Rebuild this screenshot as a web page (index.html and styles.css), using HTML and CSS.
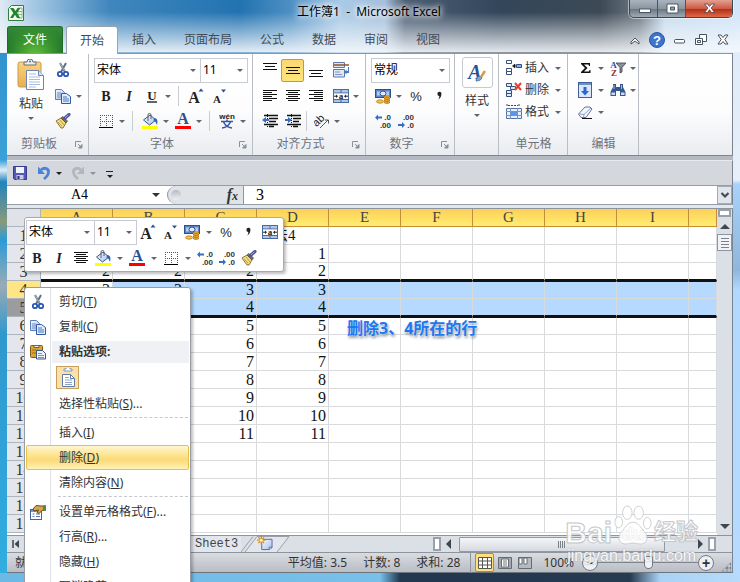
FILE: index.html
```html
<!DOCTYPE html>
<html lang="zh-CN">
<head>
<meta charset="utf-8">
<title>工作簿1 - Microsoft Excel</title>
<link rel="stylesheet" href="styles.css">
</head>
<body>
<svg class="defs" aria-hidden="true">
  <defs>
    <linearGradient id="gBlue" x1="0" y1="0" x2="1" y2="1"><stop offset="0" stop-color="#f4f8ff"/><stop offset="1" stop-color="#a9c1ea"/></linearGradient>
    <linearGradient id="gGold" x1="0" y1="0" x2="0" y2="1"><stop offset="0" stop-color="#f9d27d"/><stop offset="1" stop-color="#e9b04c"/></linearGradient>
  </defs>
</svg>
<svg class="symbols" aria-hidden="true">
  <symbol id="i-paste" viewBox="0 0 28 32">
    <rect x="1" y="3" width="23" height="25" rx="2" fill="url(#gGold)" stroke="#c99a4e"/>
    <path d="M7 6V3h3a3 3 0 0 1 6 0h3v3z" fill="#e9ebee" stroke="#6a6f77"/><circle cx="13" cy="2.500" r="1" fill="#6a6f77"/>
    <path d="M9.500 11.500h12l5 5v14h-17z" fill="#fff" stroke="#6b86b5"/><path d="M21.500 11.500v5h5" fill="#d5e2f6" stroke="#6b86b5"/>
    <path d="M12 15h7M12 18h11M12 20.500h11M12 23h11M12 25.500h11M12 28h7" stroke="#a9bddc"/>
  </symbol>
  <symbol id="i-cut" viewBox="0 0 16 16">
    <path d="M5 1l5 9M11 1L6 10" stroke="#5d7186" stroke-width="2" fill="none"/><path d="M5 1l4.500 8" stroke="#c7d3df" stroke-width=".7"/>
    <circle cx="5" cy="12" r="2.200" fill="#fff" stroke="#2b57b5" stroke-width="1.800"/><circle cx="11" cy="12" r="2.200" fill="#fff" stroke="#2b57b5" stroke-width="1.800"/>
  </symbol>
  <symbol id="i-copy" viewBox="0 0 16 16">
    <path d="M.5 1.500h6l3 3v7h-9z" fill="url(#gBlue)" stroke="#5d7fb8"/><path d="M2 5h4M2 7h4M2 9h4" stroke="#6c8ec9"/>
    <path d="M6.500 5.500h5l4 3v7h-9z" fill="#e1ebfb" stroke="#2f5aa8"/><path d="M8 9h4M8 11h6M8 13h6" stroke="#4a76be"/>
  </symbol>
  <symbol id="i-brush" viewBox="0 0 16 16">
    <path d="M1 8l5-3 5 5-3 5H6z" fill="#f1dc86" stroke="#8d7530"/><path d="M3 9l4 4M5 7l4 5" stroke="#c1a043"/>
    <path d="M6 5l2-1.500L12.500 8 11 10z" fill="#77705e" stroke="#4f4a3e" stroke-width=".7"/><path d="M9.500 5.500L14 1.500" stroke="#5154a0" stroke-width="3.200" stroke-linecap="round"/><path d="M10 5l3.500-3.200" stroke="#a4a8e0"/>
  </symbol>
  <symbol id="i-b" viewBox="0 0 16 16"><text x="8" y="12.500" text-anchor="middle" class="t-b">B</text></symbol>
  <symbol id="i-i" viewBox="0 0 16 16"><text x="8" y="12.500" text-anchor="middle" class="t-i">I</text></symbol>
  <symbol id="i-u" viewBox="0 0 16 16"><text x="8" y="11.500" text-anchor="middle" class="t-u">U</text><path d="M3 14h10" stroke="#222" stroke-width="1.400"/></symbol>
  <symbol id="i-grow" viewBox="0 0 16 16"><text x="6" y="14.500" text-anchor="middle" class="t-grow">A</text><path d="M10.500 3.500l2.500-3 2.500 3z" fill="#274f9c"/></symbol>
  <symbol id="i-shrink" viewBox="0 0 16 16"><text x="6" y="14.500" text-anchor="middle" class="t-shrink">A</text><path d="M10 1.500h5l-2.500 3z" fill="#274f9c"/></symbol>
  <symbol id="i-border" viewBox="0 0 16 16"><path d="M2 2.500h13M2 8.500h13" stroke="#555" stroke-dasharray="1 1"/><path d="M2.500 2v12M8.500 2v12M14.500 2v12" stroke="#555" stroke-dasharray="1 1"/><path d="M1 14.500h14" stroke="#000"/></symbol>
  <symbol id="i-fill" viewBox="0 0 16 16"><path d="M1.500 7L8 2l6 5-6.500 5z" fill="url(#gBlue)" stroke="#35598f"/><path d="M6 8V2a1.500 1.500 0 0 1 3 0V6" fill="none" stroke="#5a5f66"/><path d="M12 5c3.500 0 4 3 3 7-1-2.500-1.800-4-3.500-4.500z" fill="#2e64b8"/><path d="M0 13h16v3H0z" fill="#ffff00"/></symbol>
  <symbol id="i-color" viewBox="0 0 16 16"><text x="8" y="11" text-anchor="middle" class="t-color">A</text><path d="M0 13h16v3H0z" fill="#f00"/></symbol>
  <symbol id="i-wen" viewBox="0 0 16 16"><text x="8" y="6" text-anchor="middle" class="t-wen">wén</text><path d="M2 8.500h12M8 6.500v2M4.500 9C6 12 9 14.500 13 15M11.500 9C10 12 7 14.500 3 15" fill="none" stroke="#3457a8" stroke-width="1.500"/></symbol>
  <symbol id="i-top" viewBox="0 0 16 16"><path d="M1 1.500h14M3 4.500h10M1 7.500h14" stroke="#111"/></symbol>
  <symbol id="i-mid" viewBox="0 0 16 16"><path d="M1 5.500h14M3 8.500h10M1 11.500h14" stroke="#111"/></symbol>
  <symbol id="i-bot" viewBox="0 0 16 16"><path d="M1 8.500h14M3 11.500h10M1 14.500h14" stroke="#111"/></symbol>
  <symbol id="i-left" viewBox="0 0 16 16"><path d="M1 2.500h14M1 4.500h9M1 6.500h14M1 8.500h9M1 10.500h14M1 12.500h9" stroke="#111"/></symbol>
  <symbol id="i-center" viewBox="0 0 16 16"><path d="M1 2.500h14M3 4.500h10M1 6.500h14M3 8.500h10M1 10.500h14M3 12.500h10" stroke="#111"/></symbol>
  <symbol id="i-right" viewBox="0 0 16 16"><path d="M1 2.500h14M6 4.500h9M1 6.500h14M6 8.500h9M1 10.500h14M6 12.500h9" stroke="#111"/></symbol>
  <symbol id="i-outdent" viewBox="0 0 16 16"><path d="M2 2.500h14M7 5.500h9M7 8.500h7M2 11.500h14M7 13.500h5" stroke="#111" stroke-width="1.500"/><path d="M5.500 1v14" stroke="#111" stroke-dasharray="1 1"/><path d="M0 7l4-3v2h3v2H4v2z" fill="#356dc6"/></symbol>
  <symbol id="i-indent" viewBox="0 0 16 16"><path d="M2 2.500h14M8 5.500h8M8 8.500h6M2 11.500h14M8 13.500h5" stroke="#111" stroke-width="1.500"/><path d="M6.500 1v14" stroke="#111" stroke-dasharray="1 1"/><path d="M7 7L3 4v2H0v2h3v2z" fill="#356dc6"/></symbol>
  <symbol id="i-wrap" viewBox="0 0 16 16"><path d="M.5.500h11v5H.5zM.5 7.500h11v7.500h-11z" fill="#dce7f7" stroke="#5d7ba8"/><path d="M1 3h15" stroke="#8f5528" stroke-width="1.500"/><path d="M2 10h5M2 12.500h7" stroke="#7f97ba"/><path d="M15 5v4h-1.500V7.500L11 10l2.500 2.500V11H16V5z" fill="#4c77bf"/></symbol>
  <symbol id="i-merge" viewBox="0 0 16 16"><rect x=".5" y="1.500" width="15" height="13" fill="#abc7ee" stroke="#4a6a9e"/><path d="M1 5h14M1 11.500h14M8 2v3M8 12v2" stroke="#4a6a9e"/><path d="M1 5.500h14v5.500H1z" fill="#fff"/><text x="8" y="11" text-anchor="middle" class="t-merge">a</text><path d="M1 8.200h3M12 8.200h3" stroke="#222"/><path d="M3 6.500l2 1.700-2 1.700zM13 6.500l-2 1.700 2 1.700z" fill="#222"/></symbol>
  <symbol id="i-orient" viewBox="0 0 16 16"><text x="0" y="12" transform="rotate(-45 4 10)" class="t-orient">ab</text><path d="M6 15l8-8M11 7h3.500v3.500" fill="none" stroke="#555"/></symbol>
  <symbol id="i-money" viewBox="0 0 16 16"><rect x=".5" y="1.500" width="15" height="8" fill="#5c86c9" stroke="#2a4f92"/><path d="M2 3.500h4v4H2zM10 3.500h4v4h-4z" fill="#b7cdf0"/><ellipse cx="8" cy="5.500" rx="3" ry="2.500" fill="#dfeaff" stroke="#2a4f92"/><ellipse cx="5" cy="13.500" rx="3.500" ry="1.700" fill="#f5c34a" stroke="#a86f0d" stroke-width=".7"/><path d="M9 8h6v6c-1 1.500-5 1.500-6 0z" fill="#f2b63a"/><path d="M9 8.500c2 1 4 1 6 0M9 10.500c2 1 4 1 6 0M9 12.500c2 1 4 1 6 0M9 14.500c2 1 4 1 6 0" fill="none" stroke="#a8690c"/></symbol>
  <symbol id="i-pct" viewBox="0 0 16 16"><text x="8" y="12.500" text-anchor="middle" class="t-pct">%</text></symbol>
  <symbol id="i-comma" viewBox="0 0 16 16"><path d="M6.500 6a2 2 0 1 1 3.800.5C10.300 9 9 10.500 7 11.500 8 10.500 8.500 9.500 8.200 8 7.200 8 6.500 7 6.500 6z" fill="#222"/></symbol>
  <symbol id="i-inc" viewBox="0 0 16 16"><text x="16" y="7" text-anchor="end" class="t-dec">.0</text><text x="16" y="15" text-anchor="end" class="t-dec">.00</text><path d="M0 4.500l3-3v2h4v2H3v2z" fill="#356dc6"/></symbol>
  <symbol id="i-dec" viewBox="0 0 16 16"><text x="16" y="7" text-anchor="end" class="t-dec">.00</text><text x="16" y="15" text-anchor="end" class="t-dec">.0</text><path d="M7 12l-3-3v2H0v2h4v2z" fill="#356dc6"/></symbol>
  <symbol id="i-style" viewBox="0 0 20 20"><text x="8" y="16" text-anchor="middle" class="t-style">A</text><path d="M9 18c0-3 2-5 4-5l2 2c-1 2-3 3-6 3z" fill="#79a8e0" stroke="#2c5794" stroke-width=".7"/><path d="M14 14l4-6" stroke="#d4a03d" stroke-width="2.500"/></symbol>
  <symbol id="i-insert" viewBox="0 0 16 16"><path d="M.5.500h5v3h-5zM.5 8.500h5v3h-5zM.5 11.500h5v3h-5z" fill="#fff" stroke="#33507f"/><path d="M10.500 4.500h5v3h-5z" fill="#82b1f2" stroke="#33507f"/><path d="M8 6h2M9 4L6.500 6 9 8z" fill="#111" stroke="#111" stroke-width=".6"/></symbol>
  <symbol id="i-delete" viewBox="0 0 16 16"><path d="M.5 1.500h5v3h-5zM4.500 4.500h5v3h-5zM.5 8.500h5v3h-5zM.5 11.500h5v3h-5z" fill="#dceaff" stroke="#33507f"/><path d="M9 1l6 7M15 1L9 8" stroke="#e2402c" stroke-width="2"/></symbol>
  <symbol id="i-format" viewBox="0 0 16 16"><path d="M.5 4.500h15v10H.5z" fill="#e6effc" stroke="#5273a6"/><path d="M0 7.500h16M0 11.500h16M4.500 4v11M11.500 4v11" stroke="#7893bd"/><path d="M5 8h6v3H5z" fill="#5e93e8"/><path d="M1 0v3M13 0v3M2 1.500h10" stroke="#444" stroke-dasharray="2 1"/></symbol>
  <symbol id="i-sum" viewBox="0 0 16 16"><path d="M4 3h9v3h-1l-.5-1.500H7L10.500 8 7 11.500h5L12.500 10h1v3H4v-1l4-4-4-4z" fill="#111"/></symbol>
  <symbol id="i-down" viewBox="0 0 16 16"><rect x="1.500" y=".5" width="13" height="15" fill="#dbe8fb" stroke="#3e5f99"/><path d="M2 1h12v2H2z" fill="#6f8fc4"/><path d="M6.500 5h3v4H12l-4 4.500L4 9h2.500z" fill="#2c66cf"/></symbol>
  <symbol id="i-erase" viewBox="0 0 16 16"><path d="M1.500 10L8 3h5l2 2-6 8.500H4z" fill="#f2f5fa" stroke="#63769a"/><path d="M2 10l5 .5L14 4M7 10.500l-.500 3" fill="none" stroke="#8fa3c5"/><path d="M5 14.500h10" stroke="#111"/></symbol>
  <symbol id="i-sort" viewBox="0 0 16 16"><text x="3.500" y="7.500" text-anchor="middle" class="t-sa">A</text><text x="4" y="16" text-anchor="middle" class="t-sz">Z</text><path d="M6 3h10l-4 4.500V12l-2 1V7.500z" fill="#888e96" stroke="#3e444b" stroke-width=".8"/></symbol>
  <symbol id="i-find" viewBox="0 0 16 16"><path d="M3 2h3v3h4V2h3v3l2.500 5v4H10V9H6v5H.5v-4L3 5z" fill="#37588f"/><path d="M1.500 10.500h3.500v2.500H1.500zM11 10.500h3.500v2.500H11z" fill="#c8dbf8"/><path d="M4 3v4M11.500 3v4" stroke="#9bb7e4"/></symbol>
  <symbol id="i-save" viewBox="0 0 16 16"><path d="M1.500 1.500h13v13h-12l-1-1z" fill="#5558b5" stroke="#363a8f"/><path d="M4 2h8v6H4z" fill="#f1f4fb"/><path d="M4.500 10h7v4.500h-7z" fill="#c5cbe8"/><path d="M5.500 11h2v3h-2z" fill="#2a2d6e"/></symbol>
  <symbol id="i-undo" viewBox="0 0 16 16"><path d="M5 5c4-3.500 8-1 7.500 2.500C12.300 10.500 10.500 12 8 14" fill="none" stroke="currentColor" stroke-width="2.800"/><path d="M2 1.500V9h7z" fill="currentColor"/></symbol>
  <symbol id="i-sheet" viewBox="0 0 18 16"><path d="M5.500 3.500h11v9l-3 2h-8z" fill="url(#gBlue)" stroke="#51699a"/><path d="M16.500 12h-3v2.500" fill="#fff" stroke="#51699a"/><path d="M5 0v9M.5 4.500h9M2 1.500l6 6M8 1.500l-6 6" stroke="#d88a16" stroke-width="1.300"/><circle cx="5" cy="4.500" r="1.700" fill="#fff3ae"/></symbol>
  <symbol id="i-clip" viewBox="0 0 16 16"><rect x=".5" y="1.500" width="12" height="12" rx="1" fill="#dda52f" stroke="#805b16"/><path d="M4 3.500V1.500h5v2z" fill="#eee" stroke="#665"/><path d="M2 6h6M2 9h4" stroke="#9c6e15"/><path d="M6.500 6.500h6l3 3v5.500h-9z" fill="#eef4ff" stroke="#3a5687"/><path d="M8 9.500h4M8 11.500h6M8 13.500h6" stroke="#7893bd"/></symbol>
  <symbol id="i-clipdoc" viewBox="0 0 18 20"><path d="M5 3V1h2a2 2 0 0 1 4 0h2v2z" fill="#fff" stroke="#8296b5"/><path d="M3.500 6.500h8l4 4v8h-12z" fill="#fff" stroke="#5e7ba8"/><path d="M11.500 6.500v4h4" fill="none" stroke="#5e7ba8"/><path d="M6 9.500h4M6 12h7M6 14.500h7M6 16.500h7" stroke="#8ea4c7"/></symbol>
  <symbol id="i-props" viewBox="0 0 16 16"><rect x=".5" y="5.500" width="11" height="10" fill="#fff" stroke="#42659f"/><path d="M1 6h10v2H1z" fill="#6d94d4"/><path d="M2.500 10h2M6 10h4M2.500 12.500h2M6 12.500h4" stroke="#4f79bd"/><path d="M3 5l3-3.500 5 .5h5v4l-4 .5-3 3-2-1 1.500-2.500L4 7z" fill="#d7a64a" stroke="#674c18"/><path d="M13 1.500h3v5h-3z" fill="#4e8a45"/></symbol>
  <symbol id="i-excel" viewBox="0 0 16 16"><path d="M3.500.5h12v15H.5v-12z" fill="#f4f9f2" stroke="#2f7f3b"/><path d="M10 3h4v10h-4zM10 6.500h4M10 9.500h4" fill="#fff" stroke="#84bb82"/><path d="M2 3h3.500l2 3 2-3h3L9 8l3.300 5H9L7 9.800 5 13H2l3.300-5z" fill="#25842f"/></symbol>
  <symbol id="i-launch" viewBox="0 0 8 8"><path d="M.5 6V.5H6" fill="none" stroke="#8a9099"/><path d="M3 3l3 3M7 3.500V7H3.500z" fill="#8a9099" stroke="#8a9099"/></symbol>
</svg>

<div class="window">
  <header class="title">
    <svg class="app"><use href="#i-excel"/></svg>
    <h1>工作簿1&nbsp; -&nbsp; Microsoft Excel</h1>
    <div class="winctl">
      <button aria-label="最小化"><svg viewBox="0 0 28 18"><rect x="9.500" y="9" width="11" height="3.500" fill="#fff" stroke="#4a5660"/></svg></button>
      <button aria-label="最大化"><svg viewBox="0 0 28 18"><path d="M9 4h11v9H9z" fill="#fff" stroke="#4a5660"/><path d="M12.500 7h4v3h-4z" fill="#94a0aa" stroke="#4a5660"/></svg></button>
      <button class="x" aria-label="关闭"><svg viewBox="0 0 28 18"><path d="M9.500 4h3l2 2.500 2-2.500h3l-3.300 4 3.300 4.500h-3l-2-2.800-2 2.800h-3L13 8z" fill="#fff" stroke="#5c3a38" stroke-width=".8"/></svg></button>
    </div>
  </header>

  <nav class="tabs">
    <button class="file">文件</button>
    <button class="tab on">开始</button><button class="tab">插入</button><button class="tab">页面布局</button><button class="tab">公式</button><button class="tab">数据</button><button class="tab">审阅</button><button class="tab">视图</button>
    <div class="docctl">
      <button aria-label="折叠功能区"><svg viewBox="0 0 16 16"><path d="M4 10l4-4 4 4v2L8 9l-4 3z" fill="#fff" stroke="#4a525c"/></svg></button>
      <button aria-label="帮助"><svg viewBox="0 0 16 16"><circle cx="8" cy="8" r="7.500" fill="#3d74cc" stroke="#2a57a5"/><text x="8" y="12.500" text-anchor="middle" class="t-help">?</text></svg></button>
      <button aria-label="最小化工作簿"><svg viewBox="0 0 16 16"><rect x="3.500" y="7.500" width="10" height="3.500" rx="1" fill="#fff" stroke="#4a525c"/></svg></button>
      <button aria-label="还原工作簿"><svg viewBox="0 0 16 16"><path d="M6.500 2.500h7v7h-7z" fill="#fff" stroke="#4a525c"/><path d="M2.500 6.500h7v6h-7zM4.500 8.500h3v2h-3z" fill="#fff" stroke="#4a525c"/></svg></button>
      <button aria-label="关闭工作簿"><svg viewBox="0 0 16 16"><path d="M3 3h3l2 2.500L10 3h3L9.800 7.500 13 12h-3L8 9.500 6 12H3l3.200-4.500z" fill="#fff" stroke="#4a525c"/></svg></button>
    </div>
  </nav>

  <section class="ribbon">
    <div class="group g-clip">
      <div class="body cols">
        <button class="big"><svg class="s28"><use href="#i-paste"/></svg><span>粘贴</span><i class="tri"></i></button>
        <div class="rows">
          <div class="row"><button class="b" aria-label="剪切"><svg><use href="#i-cut"/></svg></button></div>
          <div class="row"><button class="b" aria-label="复制"><svg><use href="#i-copy"/></svg></button><button class="d" aria-label="复制选项"></button></div>
          <div class="row"><button class="b" aria-label="格式刷"><svg><use href="#i-brush"/></svg></button></div>
        </div>
      </div>
      <footer>剪贴板<svg class="launch"><use href="#i-launch"/></svg></footer>
    </div>

    <div class="group g-font">
      <div class="body rows">
        <div class="row">
          <span class="combo grow"><select aria-label="字体"><option>宋体</option></select></span>
          <span class="combo size"><select aria-label="字号"><option>11</option></select></span>
        </div>
        <div class="row"><button class="b" aria-label="加粗"><svg><use href="#i-b"/></svg></button><button class="b" aria-label="倾斜"><svg><use href="#i-i"/></svg></button><button class="b" aria-label="下划线"><svg><use href="#i-u"/></svg></button><button class="d" aria-label="下划线选项"></button><i class="sep"></i><button class="b" aria-label="增大字号"><svg><use href="#i-grow"/></svg></button><button class="b" aria-label="减小字号"><svg><use href="#i-shrink"/></svg></button></div>
        <div class="row"><button class="b" aria-label="边框"><svg><use href="#i-border"/></svg></button><button class="d" aria-label="边框选项"></button><i class="sep"></i><button class="b" aria-label="填充颜色"><svg><use href="#i-fill"/></svg></button><button class="d" aria-label="填充选项"></button><button class="b" aria-label="字体颜色"><svg><use href="#i-color"/></svg></button><button class="d" aria-label="颜色选项"></button><i class="sep"></i><button class="b" aria-label="拼音"><svg><use href="#i-wen"/></svg></button><button class="d" aria-label="拼音选项"></button></div>
      </div>
      <footer>字体<svg class="launch"><use href="#i-launch"/></svg></footer>
    </div>

    <div class="group g-align">
      <div class="body rows">
        <div class="row"><button class="b" aria-label="顶端对齐"><svg><use href="#i-top"/></svg></button><button class="b on" aria-label="垂直居中"><svg><use href="#i-mid"/></svg></button><button class="b" aria-label="底端对齐"><svg><use href="#i-bot"/></svg></button><button class="b wide" aria-label="自动换行"><svg><use href="#i-wrap"/></svg></button></div>
        <div class="row"><button class="b" aria-label="左对齐"><svg><use href="#i-left"/></svg></button><button class="b" aria-label="居中"><svg><use href="#i-center"/></svg></button><button class="b" aria-label="右对齐"><svg><use href="#i-right"/></svg></button><button class="b wide" aria-label="合并后居中"><svg><use href="#i-merge"/></svg></button><button class="d tight" aria-label="合并选项"></button></div>
        <div class="row"><button class="b" aria-label="减少缩进量"><svg><use href="#i-outdent"/></svg></button><button class="b" aria-label="增加缩进量"><svg><use href="#i-indent"/></svg></button><i class="sep tight"></i><button class="b" aria-label="方向"><svg><use href="#i-orient"/></svg></button><button class="d tight" aria-label="方向选项"></button></div>
      </div>
      <footer>对齐方式<svg class="launch"><use href="#i-launch"/></svg></footer>
    </div>

    <div class="group g-num">
      <div class="body rows">
        <div class="row"><span class="combo grow"><select aria-label="数字格式"><option>常规</option></select></span></div>
        <div class="row"><button class="b" aria-label="会计数字格式"><svg><use href="#i-money"/></svg></button><button class="d" aria-label="会计选项"></button><button class="b" aria-label="百分比样式"><svg><use href="#i-pct"/></svg></button><button class="b" aria-label="千位分隔样式"><svg><use href="#i-comma"/></svg></button></div>
        <div class="row"><button class="b" aria-label="增加小数位数"><svg><use href="#i-inc"/></svg></button><button class="b" aria-label="减少小数位数"><svg><use href="#i-dec"/></svg></button></div>
      </div>
      <footer>数字<svg class="launch"><use href="#i-launch"/></svg></footer>
    </div>

    <div class="group g-style">
      <button class="big"><span class="frame"><svg class="s20"><use href="#i-style"/></svg></span><span>样式</span><i class="tri"></i></button>
    </div>

    <div class="group g-cell">
      <div class="body list">
        <button class="lb"><svg><use href="#i-insert"/></svg>插入<i class="tri"></i></button>
        <button class="lb"><svg><use href="#i-delete"/></svg>删除<i class="tri"></i></button>
        <button class="lb"><svg><use href="#i-format"/></svg>格式<i class="tri"></i></button>
      </div>
      <footer>单元格</footer>
    </div>

    <div class="group g-edit">
      <div class="body list">
        <div class="row"><button class="b" aria-label="求和"><svg><use href="#i-sum"/></svg></button><button class="d" aria-label="求和选项"></button><button class="b" aria-label="排序和筛选"><svg><use href="#i-sort"/></svg></button><button class="d tight" aria-label="排序选项"></button></div>
        <div class="row"><button class="b" aria-label="填充"><svg><use href="#i-down"/></svg></button><button class="d" aria-label="填充方向"></button><button class="b" aria-label="查找和选择"><svg><use href="#i-find"/></svg></button><button class="d tight" aria-label="查找选项"></button></div>
        <div class="row"><button class="b" aria-label="清除"><svg><use href="#i-erase"/></svg></button><button class="d" aria-label="清除选项"></button></div>
      </div>
      <footer>编辑</footer>
    </div>
  </section>

  <div class="qat">
    <button aria-label="保存"><svg><use href="#i-save"/></svg></button>
    <button class="undo" aria-label="撤消"><svg><use href="#i-undo"/></svg><i class="tri"></i></button>
    <button class="redo" aria-label="恢复"><svg><use href="#i-undo"/></svg><i class="tri"></i></button>
    <button class="more" aria-label="自定义快速访问工具栏"><i class="tri"></i></button>
  </div>

  <div class="fbar">
    <span class="name"><input aria-label="名称框" value="A4"><i class="tri"></i></span>
    <span class="fx"><i class="knob"></i><em>f<small>x</small></em></span>
    <input class="formula" aria-label="编辑栏" value="3">
    <button class="expand" aria-label="展开编辑栏"><svg viewBox="0 0 10 10"><path d="M1.500 3L5 6.500 8.500 3" fill="none" stroke="#444b55" stroke-width="2.200"/></svg></button>
  </div>

  <main class="sheet">
    <div class="gridwrap">
      <table>
        <colgroup><col class="ch"><col class="cc"><col class="cc"><col class="cc"><col class="cc"><col class="cc"><col class="cc"><col class="cc"><col class="cc"><col class="cc"><col></colgroup>
        <thead><tr><th class="corner"></th><th>A</th><th>B</th><th>C</th><th>D</th><th>E</th><th>F</th><th>G</th><th>H</th><th>I</th><th></th></tr></thead>
        <tbody>
          <tr class="txt"><th>1</th><td>方法1</td><td>方法2</td><td>方法3</td><td>方法4</td><td></td><td></td><td></td><td></td><td></td><td></td></tr>
          <tr><th>2</th><td>1</td><td>1</td><td>1</td><td>1</td><td></td><td></td><td></td><td></td><td></td><td></td></tr>
          <tr class="edge"><th>3</th><td>2</td><td>2</td><td>2</td><td>2</td><td></td><td></td><td></td><td></td><td></td><td></td></tr>
          <tr class="sel after"><th>4</th><td class="active">3</td><td>3</td><td>3</td><td>3</td><td></td><td></td><td></td><td></td><td></td><td></td></tr>
          <tr class="sel edge dim"><th>5</th><td>4</td><td>4</td><td>4</td><td>4</td><td></td><td></td><td></td><td></td><td></td><td></td></tr>
          <tr class="after"><th>6</th><td>5</td><td>5</td><td>5</td><td>5</td><td></td><td></td><td></td><td></td><td></td><td></td></tr>
          <tr><th>7</th><td>6</td><td>6</td><td>6</td><td>6</td><td></td><td></td><td></td><td></td><td></td><td></td></tr>
          <tr><th>8</th><td>7</td><td>7</td><td>7</td><td>7</td><td></td><td></td><td></td><td></td><td></td><td></td></tr>
          <tr><th>9</th><td>8</td><td>8</td><td>8</td><td>8</td><td></td><td></td><td></td><td></td><td></td><td></td></tr>
          <tr><th>10</th><td>9</td><td>9</td><td>9</td><td>9</td><td></td><td></td><td></td><td></td><td></td><td></td></tr>
          <tr><th>11</th><td>10</td><td>10</td><td>10</td><td>10</td><td></td><td></td><td></td><td></td><td></td><td></td></tr>
          <tr><th>12</th><td>11</td><td>11</td><td>11</td><td>11</td><td></td><td></td><td></td><td></td><td></td><td></td></tr>
          <tr><th>13</th><td></td><td></td><td></td><td></td><td></td><td></td><td></td><td></td><td></td><td></td></tr>
          <tr><th>14</th><td></td><td></td><td></td><td></td><td></td><td></td><td></td><td></td><td></td><td></td></tr>
          <tr><th>15</th><td></td><td></td><td></td><td></td><td></td><td></td><td></td><td></td><td></td><td></td></tr>
          <tr><th>16</th><td></td><td></td><td></td><td></td><td></td><td></td><td></td><td></td><td></td><td></td></tr>
          <tr><th>17</th><td></td><td></td><td></td><td></td><td></td><td></td><td></td><td></td><td></td><td></td></tr>
        </tbody>
      </table>
    </div>
    <div class="vscroll"><i class="split"></i><i class="up"></i><i class="vthumb"></i><i class="down"></i></div>
  </main>

  <div class="sheets">
    <button class="first" aria-label="第一张工作表"><svg viewBox="0 0 10 10"><path d="M2 1v8" stroke="#3d4650" stroke-width="1.500"/><path d="M8 1v8L3.500 5z" fill="#3d4650"/></svg></button>
    <a class="stab" href="#">Sheet3</a>
    <button class="newtab" aria-label="插入工作表"><svg viewBox="0 0 52 16"><path d="M0 16L12 .5" stroke="#9aa1aa"/><path d="M4 16L16 .5h32L36 16" fill="#e3e7ed" stroke="#9aa1aa"/><use href="#i-sheet" x="15" y="0" width="18" height="15"/></svg></button>
    <div class="hscroll"><i class="vsplit"></i><i class="lt"></i><div class="track"><i class="hthumb"></i></div><i class="rt"></i><i class="vsplit"></i></div>
  </div>

  <footer class="status">
    <span class="ready">就绪</span>
    <span>平均值: 3.5</span><span>计数: 8</span><span>求和: 28</span>
    <i class="sep"></i>
    <div class="views">
      <button class="on" aria-label="普通"><svg viewBox="0 0 14 12"><path d="M.5.500h13v11H.5zM.5 4h13M.5 8h13M4.500.500v11M9.500.500v11" fill="#fff" stroke="#555"/></svg></button>
      <button aria-label="页面布局视图"><svg viewBox="0 0 14 12"><path d="M.5.500h13v11H.5z" fill="#a4a9b0" stroke="#666c74"/><path d="M3.500 2h7v8h-7z" fill="#fff" stroke="#666c74"/><path d="M5 4h4M5 6h4M5 8h4" stroke="#777"/></svg></button>
      <button aria-label="分页预览"><svg viewBox="0 0 14 12"><path d="M.5.500h13v11H.5z" fill="#b5bac1" stroke="#666c74"/><path d="M1 1h3v6H1zM6 1h3v6H6z" fill="#fff" stroke="#666c74"/></svg></button>
    </div>
    <span class="zoom">100%</span>
    <button class="round" aria-label="缩小">−</button>
    <input type="range" min="0" max="100" value="50" aria-label="显示比例">
    <button class="round" aria-label="放大">+</button>
    <i class="grip"></i>
  </footer>
</div>

<div class="callout">删除3、4所在的行</div>

<div class="mini">
  <div class="row">
    <span class="combo m1"><select aria-label="浮动字体"><option>宋体</option></select></span><span class="combo m2"><select aria-label="浮动字号"><option>11</option></select></span><button class="b" aria-label="增大字号"><svg><use href="#i-grow"/></svg></button><button class="b" aria-label="减小字号"><svg><use href="#i-shrink"/></svg></button><button class="b" aria-label="会计数字格式"><svg><use href="#i-money"/></svg></button><button class="d" aria-label="会计选项"></button><button class="b" aria-label="百分比"><svg><use href="#i-pct"/></svg></button><button class="b" aria-label="千位分隔"><svg><use href="#i-comma"/></svg></button><button class="b" aria-label="合并"><svg><use href="#i-merge"/></svg></button>
  </div>
  <div class="row">
    <button class="b" aria-label="加粗"><svg><use href="#i-b"/></svg></button><button class="b" aria-label="倾斜"><svg><use href="#i-i"/></svg></button><button class="b" aria-label="居中"><svg><use href="#i-center"/></svg></button><button class="b" aria-label="填充颜色"><svg><use href="#i-fill"/></svg></button><button class="d" aria-label="填充选项"></button><button class="b" aria-label="字体颜色"><svg><use href="#i-color"/></svg></button><button class="d" aria-label="颜色选项"></button><button class="b" aria-label="边框"><svg><use href="#i-border"/></svg></button><button class="d" aria-label="边框选项"></button><button class="b" aria-label="增加小数"><svg><use href="#i-inc"/></svg></button><button class="b" aria-label="减少小数"><svg><use href="#i-dec"/></svg></button><button class="b" aria-label="格式刷"><svg><use href="#i-brush"/></svg></button>
  </div>
</div>

<div class="menu">
  <button><svg><use href="#i-cut"/></svg><span>剪切(<u>T</u>)</span></button>
  <button><svg><use href="#i-copy"/></svg><span>复制(<u>C</u>)</span></button>
  <div class="head"><svg><use href="#i-clip"/></svg><strong>粘贴选项:</strong></div>
  <button class="opt" aria-label="粘贴"><span class="tile"><svg class="doc"><use href="#i-clipdoc"/></svg></span></button>
  <button><span>选择性粘贴(<u>S</u>)...</span></button>
  <hr>
  <button><span>插入(<u>I</u>)</span></button>
  <button class="hot"><span>删除(<u>D</u>)</span></button>
  <button><span>清除内容(<u>N</u>)</span></button>
  <hr>
  <button><svg><use href="#i-props"/></svg><span>设置单元格格式(<u>F</u>)...</span></button>
  <button><span>行高(<u>R</u>)...</span></button>
  <button><span>隐藏(<u>H</u>)</span></button>
  <button><span>取消隐藏(<u>U</u>)</span></button>
</div>

<div class="mark">
  <div class="brand"><b>Bai</b><span class="paw"><svg viewBox="0 0 40 44"><g fill="#fff" stroke="#c4c6ca"><ellipse cx="5" cy="18" rx="4" ry="6"/><ellipse cx="14" cy="8" rx="5" ry="7"/><ellipse cx="26" cy="8" rx="5" ry="7"/><ellipse cx="35" cy="19" rx="4" ry="6"/><path d="M20 18c-6 0-8 6-12 10-5 5-3 13 4 13 4 0 5-1 8-1s4 1 8 1c7 0 9-8 4-13-4-4-6-10-12-10z"/></g></svg><b>du</b></span><strong>经验</strong></div>
  <div class="url">jingyan.baidu.com</div>
</div>
</body>
</html>
```
FILE: styles.css
```css
* { box-sizing: border-box; }
html, body { height: 100%; }
body {
  margin: 0;
  overflow: hidden;
  position: relative;
  font: 12px/16px "Noto Sans", "Noto Sans CJK SC", sans-serif;
  color: #333;
  background:
    linear-gradient(180deg, rgba(255,255,255,0) 12px, rgba(246,249,252,.9) 52px, rgba(246,249,252,0) 53px) 0 0 / 100% 53px no-repeat,
    linear-gradient(90deg, #dfeaf5 0, #a9cbe6 30px, #3f86bd 110px, #2373b1 240px, #4d8fc3 290px, #a9c9e6 340px, #a5c0da 385px, #4b5d73 405px, #33465b 500px, #3d4955 600px, #6d7883 640px, #c9dcef 665px, #d2e5f9 100%) 0 0 / 100% 53px no-repeat,
    linear-gradient(90deg, #6db9e6 0, #78c0ea 380px, #22384f 400px, #263a50 630px, #a9d2f5 660px, #b7dbfa 100%) 0 100% / 100% 9px no-repeat,
    linear-gradient(180deg, #d5e4f1 0, #9cc0dd 26px, #2e90cb 27px, #3aa1d8 160px, #e0edf6 170px, #2184bd 182px, #8a9a7a 222px, #2a9bd8 240px, #9aabb5 285px, #2e98cf 335px, #31aee0 100%) 0 0 / 7px 100% no-repeat,
    linear-gradient(180deg, #dceaf8 0, #e6effa 180px, #a8d2fb 184px, #8fb6dc 270px, #b1d8ff 290px, #b6dbff 100%);
}
button, input, select { font: inherit; color: inherit; border: 0; background: none; padding: 0; margin: 0; border-radius: 0; outline: 0; }
button { display: flex; align-items: center; justify-content: center; }
svg { width: 16px; height: 16px; display: block; flex: none; }
.defs { position: absolute; width: 0; height: 0; }
.symbols { display: none; }
i { font-style: normal; flex: none; }

.t-b, .t-i, .t-u, .t-grow, .t-shrink, .t-color, .t-style, .t-merge, .t-sa, .t-sz { font-family: "Liberation Serif", serif; font-weight: bold; fill: #222; }
.t-b { font-size: 14px; }
.t-i { font-size: 14px; font-style: italic; }
.t-u { font-size: 13px; }
.t-grow { font-size: 16px; }
.t-shrink { font-size: 11px; }
.t-color { font-size: 16px; fill: #2a4f92; }
.t-style { font-size: 20px; font-style: italic; fill: #2a4f92; }
.t-merge { font-size: 9px; }
.t-sa { font-size: 9px; fill: #2a4f92; }
.t-sz { font-size: 9px; fill: #9b2f2f; }
.t-wen { font: bold 8px "Liberation Sans", sans-serif; fill: #222; }
.t-orient { font: 11px "Liberation Sans", sans-serif; fill: #222; }
.t-pct { font: 13px "Liberation Sans", sans-serif; fill: #222; }
.t-dec { font: bold 8px "Liberation Sans", sans-serif; fill: #333; }
.t-help { font: bold 13px "Liberation Sans", sans-serif; fill: #fff; }

.window {
  height: 100%;
  padding: 0 7px 9px;
  display: grid;
  grid-template-rows: 26px 27px 107px 25px 23px 1fr 17px 21px;
  grid-template-columns: minmax(0, 1fr);
}

.title { display: flex; position: relative; justify-content: space-between; }
.title .app { margin-top: 5px; margin-left: 1px; }
.title h1 {
  flex: 1; margin: 0; padding: 4px 0 0 85px; text-align: center;
  font-size: 12px; line-height: 16px; font-weight: 400; color: #000;
  text-shadow: 0 0 5px #fff, 0 0 8px #fff, 0 0 8px rgba(255,255,255,.8);
}
.winctl { display: flex; height: 18px; border: 1px solid #3c4650; border-top: 0; border-radius: 0 0 5px 5px; overflow: hidden; box-shadow: 0 0 0 1px rgba(255,255,255,.5); }
.winctl button { width: 28px; border-right: 1px solid #4a5560; background: linear-gradient(#aab4be, #8a959f 50%, #66727d 51%, #9fabb6); }
.winctl svg { width: 28px; height: 18px; }
.winctl .x { width: 46px; border-right: 0; background: linear-gradient(#e2a090, #cf5a44 50%, #b02a14 51%, #dd6a48); }

.tabs { display: flex; align-items: stretch; }
.file { width: 56px; margin-right: 3px; color: #fff; border: 1px solid #226a2c; border-bottom: 0; border-radius: 3px 3px 0 0; background: radial-gradient(ellipse at 50% 110%, #63c03c 0, #3a942f 45%, rgba(0,0,0,0) 80%), linear-gradient(#358a37, #1b6f28); }
.tab { padding: 0 13px; border: 1px solid transparent; border-bottom: 0; color: #434a54; }
.tab.on { background: #fff; border-color: #9aa3ad; border-radius: 3px 3px 0 0; margin-bottom: -1px; z-index: 1; }
.docctl { margin-left: auto; display: flex; gap: 6px; align-items: center; padding-right: 2px; }

.ribbon { display: flex; background: linear-gradient(#fff 0, #fdfdfe 55%, #e9ecf0 100%); border-top: 1px solid #8d97a2; border-bottom: 1px solid #7f868f; margin-bottom: 4px; border-right: 1px solid #7b848e; box-shadow: 0 4px 0 #b5b9c1; }
.group { display: flex; flex-direction: column; border-right: 1px solid #b9bdc4; padding: 3px 4px 0 5px; }
.g-clip { width: 82px; } .g-font { width: 164px; } .g-align { width: 113px; } .g-num { width: 89px; }
.g-style { width: 44px; } .g-cell { width: 69px; } .g-edit { width: 71px; }
.group footer { height: 20px; margin-top: auto; line-height: 18px; text-align: center; color: #6d737c; position: relative; }
.g-clip footer, .g-font footer, .g-align footer, .g-num footer { padding-right: 18px; }
.launch { width: 8px; height: 8px; position: absolute; right: 1px; top: 6px; }
.rows { display: grid; grid-template-rows: 26px 26px 24px; }
.row { display: flex; align-items: center; }
.cols { display: flex; }
.b { width: 23px; height: 23px; flex: none; }
.b.on { border: 1px solid #c59a3d; border-radius: 2px; background: linear-gradient(#fbd772, #ffe57a); }
.b.wide { margin-left: 2px; }
.d { width: 10px; height: 20px; flex: none; }
.d.tight { width: 8px; }
.d::before, .tri { content: ""; width: 0; height: 0; border: 3px solid transparent; border-top: 3px solid #61666e; border-bottom: 0; }
.sep { width: 1px; height: 20px; margin: 0 5px; background: #c9ccd2; }
.sep.tight { margin: 0 3px 0 2px; }
.combo { height: 25px; border: 1px solid #c8ccd2; background: #fff; display: flex; position: relative; }
.combo::after { content: ""; position: absolute; right: 4px; top: 10px; border: 3px solid transparent; border-top-color: #61666e; border-bottom: 0; pointer-events: none; }
.combo select { appearance: none; width: 100%; padding: 0 2px; color: #000; }
.combo.grow { flex: 1; }
.combo.size { width: 48px; }
.g-font .row .size { margin-left: -1px; }
.big { flex-direction: column; width: 36px; justify-content: flex-start; gap: 5px; padding-top: 2px; }
.g-clip .big { width: 40px; margin-right: 1px; padding-right: 0; }
.big .s28 { width: 28px; height: 32px; }
.g-style .big { width: 34px; padding-top: 0; }
.frame { border: 1px solid #c5cad2; border-radius: 3px; width: 31px; height: 31px; display: grid; place-items: center; }
.s20 { width: 20px; height: 20px; }
.list { display: grid; grid-template-rows: 22px 22px 22px; }
.lb { justify-content: flex-start; gap: 3px; padding-left: 2px; }
.lb .tri { margin-left: 3px; }

.qat { display: flex; align-items: center; gap: 8px; padding-left: 5px; background: #d4d7dc; border-top: 1px solid #e6ebf1; border-right: 1px solid #7b848e; }
.qat button { gap: 4px; }
.qat .undo { color: #4a82d6; }
.qat .redo { color: #b3b7bd; }
.redo svg { transform: scaleX(-1); }
.undo .tri, .more .tri { border-top-color: #222; }
.redo .tri { border-top-color: #8e9299; }
.more { border-top: 1px solid #222; padding-top: 3px; margin: 2px 0 0 2px; width: 7px; }

.fbar { display: flex; height: 20px; background: #fff; border-top: 1px solid #959da6; border-bottom: 1px solid #959da6; border-right: 1px solid #7b848e; box-shadow: 0 3px 0 #e3e8ef; }
.name { width: 160px; display: flex; align-items: center; padding-right: 7px; }
.name input { flex: 1; min-width: 0; text-align: center; font: 14px/18px "Liberation Serif", serif; color: #000; }
.name .tri { border-width: 4px 4px 0; border-top-color: #333; }
.fx { width: 77px; display: flex; justify-content: space-between; align-items: center; background: #dfe3e8; border-radius: 10px 0 0 10px; border-left: 1px solid #8e959e; border-right: 1px solid #8e959e; padding: 0 5px 0 3px; }
.knob { width: 10px; height: 10px; border-radius: 5px; background: linear-gradient(#b5bac2, #eef0f3); }
.fx em { font: italic bold 16px/16px "Liberation Serif", serif; color: #333; }
.fx small { font-size: 12px; }
.formula { flex: 1; min-width: 0; padding-left: 12px; font: 16px/18px "Liberation Serif", serif; color: #000; }
.expand { width: 15px; background: #e1e6ec; border: 1px solid #a3abb5; }
.expand svg { width: 10px; height: 10px; }

.sheet { display: flex; min-height: 0; background: #fff; border-top: 1px solid #8d949c; border-right: 1px solid #7b848e; }
.gridwrap { flex: 1; min-width: 0; overflow: hidden; }
table { width: 100%; table-layout: fixed; border-collapse: separate; border-spacing: 0; font: 16px/17px "Liberation Serif", "Noto Sans CJK SC", serif; color: #111; }
.ch { width: 34px; }
.cc { width: 72px; }
th, td { height: 18px; padding: 0; border-right: 1px solid #d9dadc; border-bottom: 1px solid #d9dadc; overflow: hidden; white-space: nowrap; }
td { text-align: right; padding-right: 2px; }
.txt td { text-align: left; font-size: 15px; padding-left: 1px; }
thead th { font-weight: 400; font-size: 15px; color: #444; background: linear-gradient(#fdcf58, #ffee70); border-color: #c58d35; }
tbody th { font-weight: 400; background: #e3e7ed; color: #333; border-color: #aeb4bc; }
th.corner { background: #dfe3e9; border-color: #aeb4bc; }
.edge td { border-bottom: 2px solid #111; line-height: 16px; }
.after td { border-top: 1px solid #111; line-height: 16px; }
.sel td { background: #b5d9ff; }
.sel td.active { background: #fff; }
.sel th { background: #ffe585; }
.dim th { background: #9b9c9f; }
.vscroll { width: 15px; display: flex; flex-direction: column; align-items: center; background: #dbdfe6; }
.split { width: 13px; height: 8px; background: #fff; border: 2px solid #9aa1ac; }
.up { margin: 7px 0 5px; border: 5px solid transparent; border-top: 0; border-bottom-color: #3f4650; }
.vthumb { width: 15px; height: 17px; border: 1px solid #8f969f; background: repeating-linear-gradient(#7b828b 0 1px, #f2f4f7 1px 3px) 50% 50% / 8px 10px no-repeat, #f0f2f5; }
.down { margin: auto 0 6px; border: 5px solid transparent; border-bottom: 0; border-top-color: #3f4650; }

.sheets { display: flex; background: #dbdfe6; border-top: 1px solid #8d949c; border-right: 1px solid #7b848e; min-width: 0; }
.first { width: 18px; }
.first svg { width: 10px; height: 10px; }
.stab { margin-left: 163px; padding: 0 3px 0 7px; font: 12px/16px "Liberation Mono", monospace; color: #444; text-decoration: none; background: #e3e7ed; }
.newtab svg { width: 52px; height: 16px; }
.hscroll { flex: 1; display: flex; align-items: center; justify-content: flex-end; min-width: 0; padding-right: 16px; margin-left: 140px; }
.vsplit { width: 8px; height: 14px; background: #fff; border: 2px solid #9aa1ac; }
.lt { margin: 0 8px 0 5px; border: 5px solid transparent; border-left: 0; border-right-color: #3f4650; }
.rt { margin: 0 5px; border: 5px solid transparent; border-right: 0; border-left-color: #3f4650; }
.track { flex: 1; }
.hthumb { display: block; width: 88%; height: 15px; border: 1px solid #9299a3; border-radius: 1px; background: repeating-linear-gradient(90deg, #7b828b 0 1px, transparent 1px 2px) 50% 50% / 8px 7px no-repeat, linear-gradient(#f5f6f8, #d5d9df); }

.status { display: flex; align-items: center; background: linear-gradient(#d9dce1, #b9bdc4); border-top: 1px solid #8d949c; border-right: 1px solid #7b848e; border-bottom: 1px solid #6c747e; color: #333; padding-left: 8px; white-space: nowrap; }
.status > span { margin-right: 16px; }
.status .ready { margin-right: auto; }
.status > .sep { margin: 0 4px 0 -6px; background: #8f969f; }
.views { display: flex; gap: 1px; }
.views button { width: 19px; height: 19px; }
.views svg { width: 14px; height: 12px; }
.views .on { border: 1px solid #bb8b2a; border-radius: 2px; background: #ffe07a; }
.status > .zoom { margin: 0 8px 0 9px; }
.round { width: 16px; height: 16px; border: 1px solid #737a83; border-radius: 8px; background: #eef0f3; font: bold 14px/14px "Liberation Sans", sans-serif; flex: none; }
input[type=range] { appearance: none; width: 100px; height: 16px; background: linear-gradient(#7e858e, #7e858e) 50% 50% / 100% 1px no-repeat; }
input[type=range]::-webkit-slider-thumb { appearance: none; width: 9px; height: 13px; background: #f1f3f6; border: 1px solid #717881; border-radius: 1px 1px 5px 5px; }
.grip { width: 10px; height: 10px; margin: 8px 1px 0 7px; background: radial-gradient(circle at 2px 2px, #7e858e 1px, transparent 2px) 0 0 / 4px 4px; clip-path: polygon(100% 0, 100% 100%, 0 100%); }

.callout {
  position: absolute; left: 347px; top: 318px;
  font-size: 16px; line-height: 20px; font-weight: 700; color: #1c77f2;
  text-shadow: 0 0 2px #fff, 1px 2px 3px #6c7b8e;
}

.mini { position: absolute; left: 24px; top: 217px; width: 260px; height: 55px; padding: 1px; background: #fff; border: 1px solid #a7abb0; border-radius: 3px; box-shadow: 2px 2px 3px rgba(0,0,0,.25); }
.mini .row { height: 26px; }
.mini .b { width: 22px; }
.mini .d { width: 12px; }
.mini .m1 { width: 69px; }
.mini .m2 { width: 43px; margin-left: -1px; }

.menu {
  position: absolute; left: 24px; top: 287px; width: 167px; padding: 1px;
  border: 1px solid #989ca3; border-radius: 3px 3px 0 0; box-shadow: 2px 2px 3px rgba(0,0,0,.25);
  background: linear-gradient(90deg, #fff 25px, #dfe2e6 25px, #dfe2e6 26px, #fff 26px);
}
.menu button, .menu .head { display: grid; grid-template-columns: 26px 1fr; align-items: center; width: 100%; height: 25px; text-align: left; padding-left: 4px; color: #333; }
.menu span, .menu strong { grid-column: 2; padding-left: 3px; }
.menu strong { background: #eff1f5; line-height: 22px; font-weight: 700; margin-left: -4px; padding-left: 7px; }
.menu button.opt { height: 27px; }
.menu .tile { width: 23px; height: 23px; border: 1px solid #c9a05b; background: #fbe0a9; padding: 0; display: grid; place-items: center; }
.menu .doc { width: 18px; height: 20px; }
.menu hr { margin: 1px 1px 2px 32px; border: 0; border-top: 1px dashed #c5c8cc; }
.menu .hot { border: 1px solid #e5c04d; border-radius: 2px; background: linear-gradient(#fff6d0 0, #fde28a 45%, #fbd977 60%, #fff2b8 100%); padding-left: 3px; }

.mark { position: absolute; right: 42px; bottom: 18px; color: rgba(255,255,255,.9); text-align: center; pointer-events: none; }
.brand { display: flex; align-items: flex-end; height: 46px; gap: 2px; font-family: "Liberation Sans", "Noto Sans CJK SC", sans-serif; -webkit-text-stroke: 1px #c4c6ca; }
.brand b { font-size: 30px; line-height: 30px; }
.brand strong { font-size: 22px; line-height: 32px; }
.paw { display: grid; }
.paw > * { grid-area: 1 / 1; }
.paw svg { width: 38px; height: 44px; opacity: .85; }
.paw b { font-size: 18px; line-height: 20px; align-self: end; padding-bottom: 4px; text-align: center; -webkit-text-stroke-color: #a9acb2; }
.url { font: 16px/16px "Liberation Sans", sans-serif; text-shadow: 0 0 2px #9a9da3; }
```
